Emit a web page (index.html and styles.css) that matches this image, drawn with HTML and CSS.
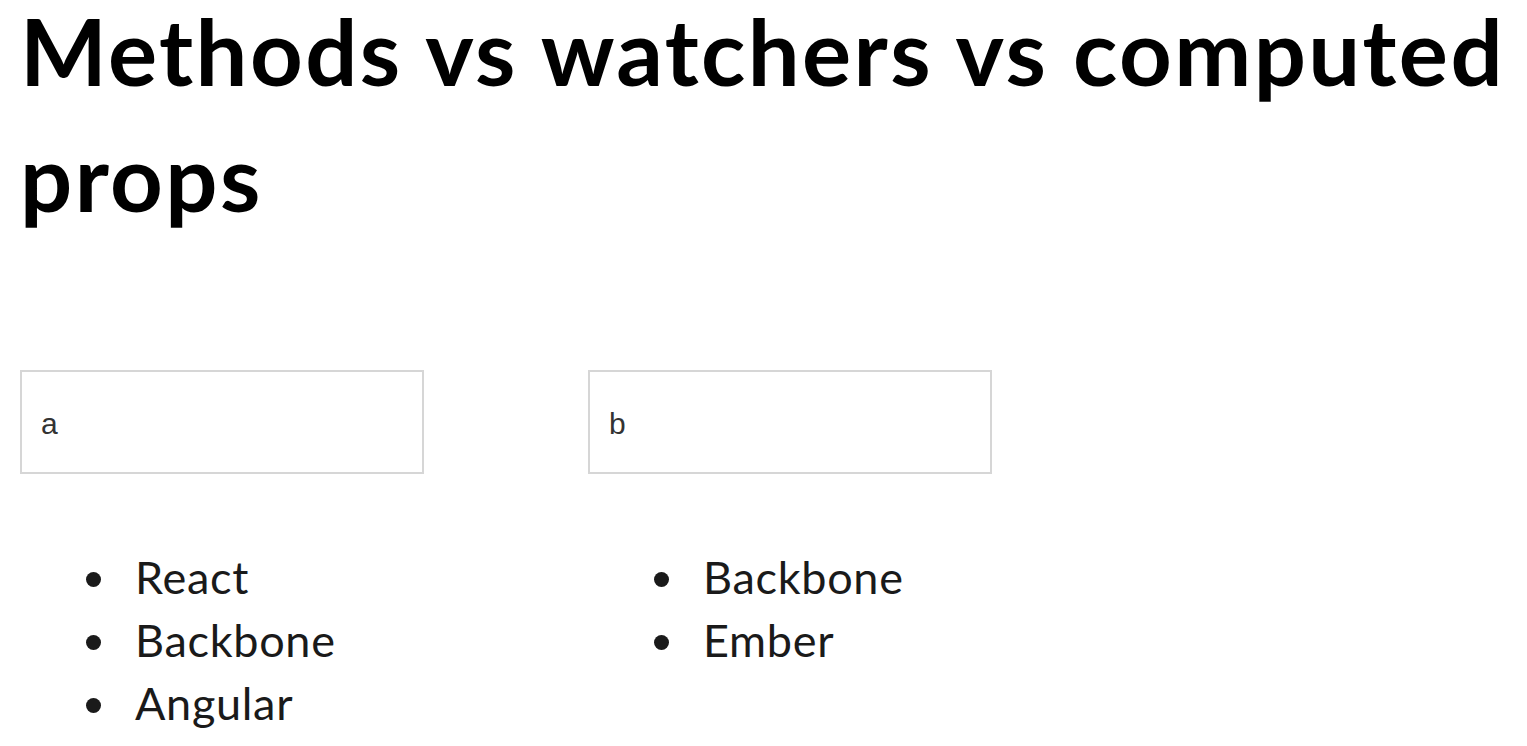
FILE: index.html
```html
<!DOCTYPE html>
<html lang="en">
<head>
<meta charset="utf-8">
<title>Methods vs watchers vs computed props</title>
<link rel="stylesheet" href="styles.css">
</head>
<body>
<div class="page">
  <h1 class="title">Methods vs watchers vs computed props</h1>
  <div class="columns">
    <div class="column">
      <input class="field" type="text" value="a">
      <ul class="items">
        <li>React</li>
        <li>Backbone</li>
        <li>Angular</li>
      </ul>
    </div>
    <div class="column">
      <input class="field" type="text" value="b">
      <ul class="items">
        <li>Backbone</li>
        <li>Ember</li>
      </ul>
    </div>
  </div>
</div>
</body>
</html>
```

FILE: styles.css
```css
html, body {
  margin: 0;
  padding: 0;
  background: #ffffff;
}

.page {
  padding: 0 8px 0 20px;
  font-family: Lato, "Noto Sans", "Liberation Sans", sans-serif;
  color: #000;
}

.title {
  margin: -12px 0 0 0;
  font-family: Lato, "Noto Sans", sans-serif;
  font-weight: 700;
  font-size: 92px;
  line-height: 126px;
  letter-spacing: 2.4px;
  color: #000;
}

.columns {
  display: flex;
  gap: 164px;
  margin-top: 130px;
}

.column {
  display: flex;
  flex-direction: column;
  width: 404px;
}

.field {
  box-sizing: border-box;
  width: 404px;
  height: 104px;
  margin: 0;
  padding: 4px 19px 0 19px;
  border: 2px solid #d6d6d6;
  border-radius: 0;
  background: #fff;
  font-family: "Liberation Sans", Arial, sans-serif;
  font-size: 30px;
  color: #333;
  outline: none;
}

.items {
  margin: 72px 0 0 0;
  padding: 0 0 0 102px;
  list-style: disc;
  font-family: Lato, "Noto Sans", sans-serif;
  font-size: 45px;
  line-height: 63px;
  letter-spacing: 0.7px;
  color: #1a1a1a;
}

.items li {
  padding-left: 13px;
}
```
